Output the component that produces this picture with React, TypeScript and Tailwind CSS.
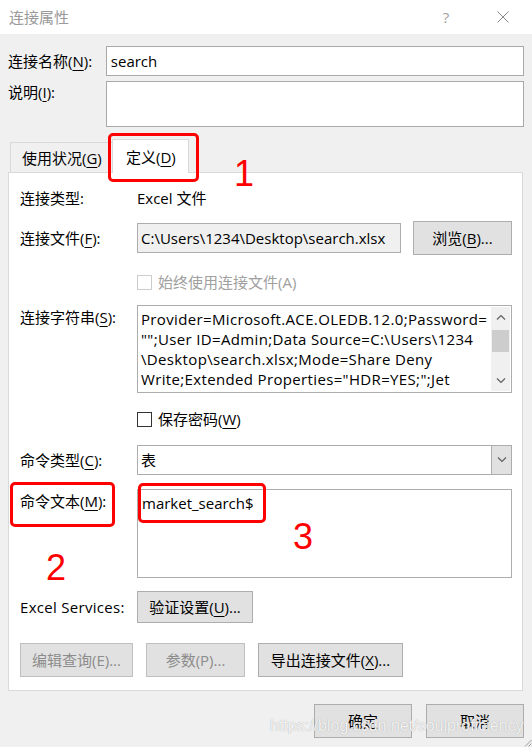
import React from "react";

function U({ children }: { children: React.ReactNode }) {
  return <span className="underline underline-offset-[3px] decoration-1">{children}</span>;
}

type BtnProps = {
  children: React.ReactNode;
  width: string;
  height: string;
  disabled?: boolean;
};

function Btn({ children, width, height, disabled }: BtnProps) {
  return (
    <div
      className={`${width} ${height} flex items-center justify-center border ${
        disabled ? "bg-[#e1e1e1] border-[#bfbfbf] text-[#8c8c8c]" : "bg-[#e1e1e1] border-[#adadad] text-black"
      }`}
    >
      {children}
    </div>
  );
}

function Check({ disabled }: { disabled?: boolean }) {
  return (
    <span
      className={`w-[15px] h-[15px] border bg-white shrink-0 ${
        disabled ? "border-[#cccccc]" : "border-[#333333]"
      }`}
    />
  );
}

function Chevron({ up }: { up?: boolean }) {
  return (
    <svg width="10" height="6" viewBox="0 0 10 6" className="block">
      <path
        d={up ? "M1 5.5 L5 1.5 L9 5.5" : "M1 0.5 L5 4.5 L9 0.5"}
        fill="none"
        stroke="#606060"
        strokeWidth="1.2"
      />
    </svg>
  );
}

export default function App() {
  return (
    <div className="relative w-[532px] h-[747px] overflow-hidden bg-[#f0f0f0] font-['Open_Sans','Noto_Sans_CJK_SC',sans-serif] text-[15px] leading-[20px] text-black">
      {/* title bar */}
      <div className="h-[34px] bg-white flex items-center pl-[9px] text-[#999999]">
        <span className="flex-1">连接属性</span>
        <span className="w-[16px] text-center text-[#a0a0a0] mr-[43px]">?</span>
        <svg width="12" height="12" viewBox="0 0 12 12" className="mr-[23px]">
          <path d="M0.5 0.5 L11.5 11.5 M11.5 0.5 L0.5 11.5" stroke="#8a8a8a" strokeWidth="1" />
        </svg>
      </div>

      <div className="px-[8px]">
        <div className="mt-[12px] flex items-center">
          <div className="w-[98px]">
            连接名称(<U>N</U>):
          </div>
          <div className="h-[30px] w-[419px] border border-[#a9a9a9] bg-white pl-[4px] flex items-center">
            search
          </div>
        </div>
        <div className="mt-[5px] flex items-start">
          <div className="w-[98px] mt-[1px]">
            说明(<U>I</U>):
          </div>
          <div className="h-[46px] w-[419px] border border-[#a9a9a9] bg-white" />
        </div>

        {/* tabs */}
        <div className="mt-[12px] flex items-end pl-[2px]">
          <div className="h-[30px] w-[102px] border-t border-l border-[#d9d9d9] flex items-center pl-[11px]">
            使用状况(<U>G</U>)
          </div>
          <div className="relative z-10 -mb-px h-[34px] w-[77px] bg-white border border-b-0 border-[#d9d9d9] flex items-center pl-[13px]">
            定义(<U>D</U>)
          </div>
        </div>

        <div className="h-[519px] w-[515px] border border-[#d9d9d9] bg-white pl-[11px] pr-[10px] pt-[15px]">
          <div className="h-[20px] flex items-center">
            <div className="w-[117px]">连接类型:</div>
            <div>Excel 文件</div>
          </div>

          <div className="mt-[13px] h-[34px] flex items-center">
            <div className="w-[117px]">
              连接文件(<U>F</U>):
            </div>
            <div className="h-[30px] w-[264px] border border-[#adadad] bg-[#f0f0f0] pl-[3px] flex items-center whitespace-nowrap overflow-hidden">
              C:\Users\1234\Desktop\search.xlsx
            </div>
            <div className="ml-[12px]">
              <Btn width="w-[99px]" height="h-[34px]">
                浏览(<U>B</U>)...
              </Btn>
            </div>
          </div>

          <div className="mt-[17px] h-[20px] flex items-center pl-[117px] gap-[6px] text-[#a0a0a0]">
            <Check disabled />
            <span>始终使用连接文件(A)</span>
          </div>

          <div className="mt-[13px] flex items-start">
            <div className="w-[117px] mt-[2px]">
              连接字符串(<U>S</U>):
            </div>
            <div className="relative h-[88px] w-[375px] border border-[#adadad] bg-white pl-[3px] pt-[3px] whitespace-nowrap tracking-[0.35px]">
              <div>Provider=Microsoft.ACE.OLEDB.12.0;Password=</div>
              <div>"";User ID=Admin;Data Source=C:\Users\1234</div>
              <div>\Desktop\search.xlsx;Mode=Share Deny</div>
              <div>Write;Extended Properties="HDR=YES;";Jet</div>
              <div className="absolute right-[1px] top-[1px] bottom-[1px] w-[19px] bg-[#f0f0f0] flex flex-col items-center">
                <div className="h-[20px] flex items-center justify-center">
                  <Chevron up />
                </div>
                <div className="mt-[3px] h-[22px] w-[17px] bg-[#cdcdcd]" />
                <div className="flex-1" />
                <div className="h-[20px] flex items-center justify-center">
                  <Chevron />
                </div>
              </div>
            </div>
          </div>

          <div className="mt-[16px] h-[20px] flex items-center pl-[117px] gap-[6px]">
            <Check />
            <span>
              保存密码(<U>W</U>)
            </span>
          </div>

          <div className="mt-[16px] h-[30px] flex items-center">
            <div className="w-[117px]">
              命令类型(<U>C</U>):
            </div>
            <div className="h-[30px] w-[375px] border border-[#adadad] bg-white flex">
              <div className="flex-1 pl-[3px] flex items-center">表</div>
              <div className="w-[20px] bg-[#e1e1e1] border-l border-[#adadad] flex items-center justify-center">
                <Chevron />
              </div>
            </div>
          </div>

          <div className="mt-[14px] flex items-start">
            <div className="w-[117px] mt-[2px]">
              命令文本(<U>M</U>):
            </div>
            <div className="h-[89px] w-[375px] border border-[#adadad] bg-white pl-[4px] pt-[3px]">
              market_search$
            </div>
          </div>

          <div className="mt-[13px] h-[32px] flex items-center">
            <div className="w-[117px] tracking-[0.3px]">Excel Services:</div>
            <Btn width="w-[116px]" height="h-[32px]">
              验证设置(<U>U</U>)...
            </Btn>
          </div>

          <div className="mt-[20px] flex gap-[13px]">
            <Btn width="w-[113px]" height="h-[34px]" disabled>
              编辑查询(E)...
            </Btn>
            <Btn width="w-[99px]" height="h-[34px]" disabled>
              参数(P)...
            </Btn>
            <Btn width="w-[145px]" height="h-[34px]">
              导出连接文件(<U>X</U>)...
            </Btn>
          </div>
        </div>

        <div className="mt-[13px] flex justify-end gap-[14px]">
          <Btn width="w-[98px]" height="h-[34px]">
            确定
          </Btn>
          <Btn width="w-[98px]" height="h-[34px]">
            取消
          </Btn>
        </div>
      </div>

      {/* annotations */}
      <div className="absolute left-[108px] top-[133px] w-[91px] h-[49px] border-[3px] border-[#ff0000] rounded-[5px]" />
      <div className="absolute left-[10px] top-[482px] w-[105px] h-[45px] border-[3px] border-[#ff0000] rounded-[5px]" />
      <div className="absolute left-[138px] top-[483px] w-[128px] h-[40px] border-[3px] border-[#ff0000] rounded-[5px]" />
      <span className="absolute left-[234px] top-[156px] text-[36px] leading-none text-[#ff0000] font-['Liberation_Sans',sans-serif]">1</span>
      <span className="absolute left-[46px] top-[550px] text-[36px] leading-none text-[#ff0000] font-['Liberation_Sans',sans-serif]">2</span>
      <span className="absolute left-[293px] top-[519px] text-[36px] leading-none text-[#ff0000] font-['Liberation_Sans',sans-serif]">3</span>

      {/* watermark */}
      <span className="absolute left-[270px] top-[716px] text-[16px] leading-[20px] text-white/85 font-['Liberation_Sans',sans-serif] [text-shadow:0_0_1px_#9a9a9a]">
        https://blog.csdn.net/soulproficiency
      </span>

      {/* resize grip */}
      <svg width="9" height="9" viewBox="0 0 9 9" className="absolute right-0 bottom-0">
        <path d="M8.5 2 L2 8.5 M8.5 5.5 L5.5 8.5" stroke="#9a9a9a" strokeWidth="1" />
      </svg>
    </div>
  );
}
